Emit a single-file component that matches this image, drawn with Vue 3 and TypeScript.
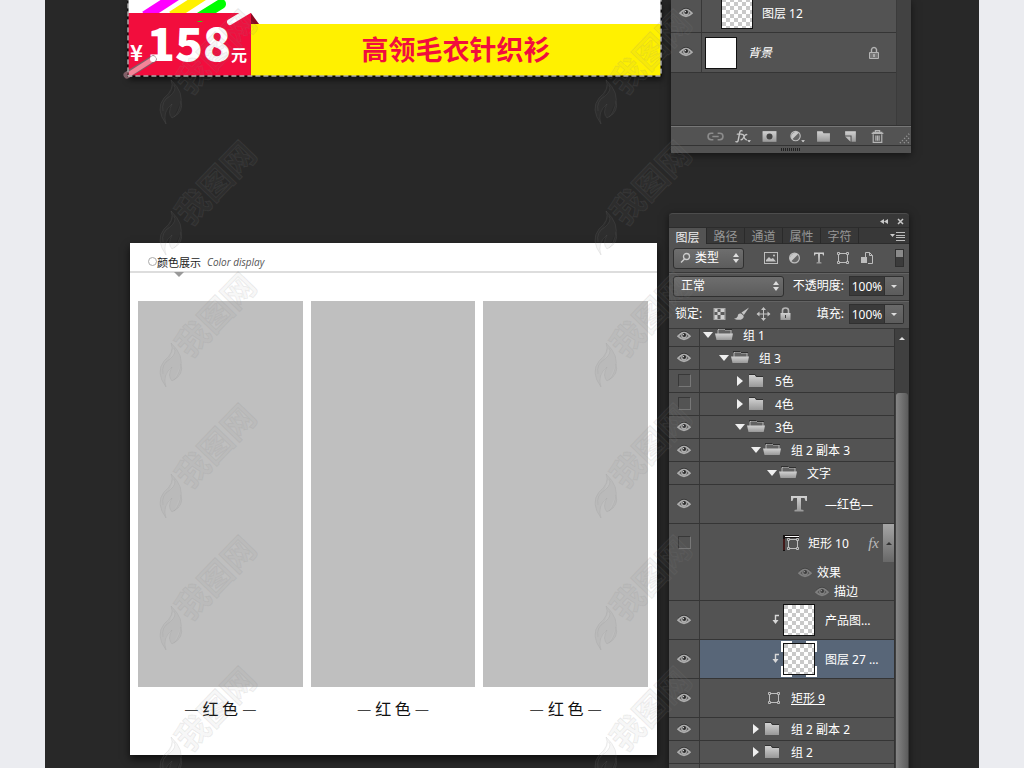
<script setup lang="ts">
import { ref } from 'vue'

type Kind = 'open' | 'closed' | 'text' | 'shape' | 'shapeOnly' | 'thumb'

interface Layer {
  name: string
  kind: Kind
  indent: number
  visible: boolean
  tall?: boolean
  selected?: boolean
  linked?: boolean
  effects?: string[]
}

const tabs = ['图层', '路径', '通道', '属性', '字符']
const activeTab = ref('图层')
const filter = ref('类型')
const mode = ref('正常')
const opacity = ref('100%')
const fill = ref('100%')

const layers = ref<Layer[]>([
  { name: '组 1', kind: 'open', indent: 3, visible: true },
  { name: '组 3', kind: 'open', indent: 19, visible: true },
  { name: '5色', kind: 'closed', indent: 35, visible: false },
  { name: '4色', kind: 'closed', indent: 35, visible: false },
  { name: '3色', kind: 'open', indent: 35, visible: true },
  { name: '组 2 副本 3', kind: 'open', indent: 51, visible: true },
  { name: '文字', kind: 'open', indent: 67, visible: true },
  { name: '—红色—', kind: 'text', indent: 83, visible: true, tall: true },
  { name: '矩形 10', kind: 'shape', indent: 83, visible: false, tall: true, effects: ['效果', '描边'] },
  { name: '产品图…', kind: 'thumb', indent: 71, visible: true, tall: true },
  { name: '图层 27 …', kind: 'thumb', indent: 71, visible: true, tall: true, selected: true },
  { name: '矩形 9', kind: 'shapeOnly', indent: 67, visible: true, tall: true, linked: true },
  { name: '组 2 副本 2', kind: 'closed', indent: 51, visible: true },
  { name: '组 2', kind: 'closed', indent: 51, visible: true },
  { name: '', kind: 'closed', indent: 51, visible: false },
])

const filterIcons = [
  { id: 'i-image', label: '像素图层' },
  { id: 'i-adjust', label: '调整图层' },
  { id: 'i-type', label: '文字图层' },
  { id: 'i-shape', label: '形状图层' },
  { id: 'i-smart', label: '智能对象' },
]
const lockIcons = [
  { id: 'i-checker', label: '锁定透明像素' },
  { id: 'i-brush', label: '锁定图像像素' },
  { id: 'i-move', label: '锁定位置' },
  { id: 'i-lock', label: '锁定全部' },
]
const tools = [
  { id: 'i-link', label: '链接图层' },
  { id: 'i-fx', label: '图层样式' },
  { id: 'i-mask', label: '蒙版' },
  { id: 'i-adjust-menu', label: '调整' },
  { id: 'i-folder', label: '新建组' },
  { id: 'i-new', label: '新建图层' },
  { id: 'i-trash', label: '删除图层' },
]
const swatches = ['红 色', '红 色', '红 色']
const marks = [0, 1].flatMap((c) => [0, 1, 2, 3, 4, 5].map((r) => ({ x: 159 + c * 435, y: 7 + Math.round(r * 131.4) })))
</script>

<template>
  <div class="page">
    <svg class="defs" aria-hidden="true">
      <defs>
        <linearGradient id="metal" x1="0" y1="0" x2="0" y2="1">
          <stop offset="0" stop-color="#d2d2d2" />
          <stop offset="1" stop-color="#989898" />
        </linearGradient>
        <pattern id="checks" width="8" height="8" patternUnits="userSpaceOnUse">
          <rect width="8" height="8" fill="#fff" />
          <path d="M0 0h4v4H0zM4 4h4v4H4z" fill="#c9c9c9" />
        </pattern>
      </defs>
      <symbol id="i-eye" viewBox="0 0 14 12">
        <path d="M1 4.500Q7 -2 13 4.500" fill="none" stroke="#333" stroke-width="1" />
        <path d="M1 6.200Q7 -1 13 6.200Q7 12.500 1 6.200z" fill="#5a5a5a" stroke="#adadad" stroke-width="1.700" />
        <circle cx="7" cy="5.800" r="2.900" fill="#adadad" />
        <circle cx="7.200" cy="5" r="1.900" fill="#2c2c2c" />
        <circle cx="6.400" cy="4.600" r=".7" fill="#ddd" />
      </symbol>
      <symbol id="i-down" viewBox="0 0 12 12"><path d="M0 3h10L5 9z" fill="#efefef" /></symbol>
      <symbol id="i-right" viewBox="0 0 12 12"><path d="M2 1v10l6-5z" fill="#efefef" /></symbol>
      <symbol id="i-folder-open" viewBox="0 0 20 14">
        <path d="M3 6V2l1-1h5l1 1h6v4" fill="#626262" stroke="#b5b5b5" />
        <path d="M2 0.500h7l1 1h7" fill="none" stroke="#303030" />
        <path d="M0 5.500h18l-1.300 6.500H1.500z" fill="url(#metal)" />
      </symbol>
      <symbol id="i-folder-closed" viewBox="0 0 20 14">
        <path d="M2 1h6l1 2h7v10H2z" fill="url(#metal)" />
        <path d="M2 .5h6l1.500 2H16" fill="none" stroke="#303030" />
      </symbol>
      <symbol id="i-shape" viewBox="0 0 14 14">
        <g fill="none" stroke="#bdbdbd">
          <path d="M3.500 2.500h7M3.500 11.500h7M2.500 3.500v7M11.500 3.500v7" />
          <path d="M1.500 1.500h2v2h-2zM10.500 1.500h2v2h-2zM1.500 10.500h2v2h-2zM10.500 10.500h2v2h-2z" />
        </g>
      </symbol>
      <symbol id="i-image" viewBox="0 0 14 14">
        <rect x=".5" y="1.500" width="13" height="11" fill="none" stroke="#bdbdbd" />
        <path d="M2 10.500V9L5 6l2 2 2-1 3 3.500z" fill="#c4c4c4" /><circle cx="10" cy="4.500" r="1" fill="#c4c4c4" />
      </symbol>
      <symbol id="i-adjust" viewBox="0 0 14 14">
        <circle cx="6.500" cy="7" r="4.900" fill="#666" stroke="#bdbdbd" stroke-width="1.200" />
        <path d="M3 10.500A5 5 0 0 1 10 3.500z" fill="#c8c8c8" />
      </symbol>
      <symbol id="i-type" viewBox="0 0 14 14">
        <path d="M2 1.500h10v3h-1L10.500 3H8v8l1.500.5v1h-5v-1L6 11V3H3.500L3 4.500H2z" fill="url(#metal)" />
      </symbol>
      <symbol id="i-type-large" viewBox="0 0 16 16">
        <path d="M0 0h16v5h-1.500L13.500 2H10v11.500l2.500.5v1.500h-9V14l2.500-.5V2H2.500L1.500 5H0z" fill="url(#metal)" />
      </symbol>
      <symbol id="i-smart" viewBox="0 0 14 14">
        <path d="M5.500 6V1.500h4l3 3v8H8M9.500 1.500v3h3" fill="none" stroke="#bdbdbd" /><path d="M1 6h6v6H1z" fill="#bdbdbd" />
      </symbol>
      <symbol id="i-checker" viewBox="0 0 14 14">
        <rect x="1.500" y="1.500" width="11" height="11" fill="#5c5c5c" stroke="#aaa" />
        <path d="M2 2h3v3H2zM8 2h4v3H8zM5 5h3v3H5zM2 8h3v4H2zM8 8h4v4H8z" fill="#d0d0d0" />
      </symbol>
      <symbol id="i-brush" viewBox="0 0 16 14">
        <path d="M16 0L8 5.500l2.500 2.500zM7.500 6.500Q4 6 4 9.500q-1 2.500-4 2.500 6 2.500 9 0 2-1 1-3.500z" fill="#c4c4c4" />
      </symbol>
      <symbol id="i-move" viewBox="0 0 14 14">
        <path d="M7 1v12M1 7h12" stroke="#c4c4c4" />
        <path d="M7 0L4.500 3h5zM7 14l-2.500-3h5zM0 7l3-2.500v5zM14 7l-3-2.500v5z" fill="#c4c4c4" />
      </symbol>
      <symbol id="i-lock" viewBox="0 0 14 14">
        <path d="M4 7V3.500Q4 1 7 1t3 2.500V7" fill="none" stroke="#b5b5b5" stroke-width="1.600" />
        <path d="M2 6h10v7H2z" fill="url(#metal)" /><path d="M6.500 8h1v3h-1z" fill="#444" />
      </symbol>
      <symbol id="i-lock-line" viewBox="0 0 14 14">
        <path d="M4.500 6V3.500Q5 1.500 7 1.500t2.500 2V6" fill="none" stroke="#b5b5b5" stroke-width="1.400" />
        <path d="M2.500 6.500h9v6h-9z" fill="#777" stroke="#b5b5b5" /><path d="M6.500 8h1v3h-1z" fill="#ddd" />
      </symbol>
      <symbol id="i-link" viewBox="0 0 16 14">
        <path d="M6 4H4a3 3 0 0 0 0 6h2M10 4h2a3 3 0 0 1 0 6h-2M5 7h6" fill="none" stroke="#8c8c8c" stroke-width="1.500" />
      </symbol>
      <symbol id="i-fx" viewBox="0 0 18 16">
        <g fill="none" stroke="#c4c4c4" stroke-width="1.500" stroke-linecap="round">
          <path d="M8.500 2Q6.500 1 6 4L4.500 11.500Q4 14.500 2 13.500M3.500 5.500h4.500" />
          <path d="M8.500 6Q10 5 10.500 8T13 11.500M13.500 6Q12 5.500 10.500 8.500T7.500 11.500" />
        </g>
        <path d="M14 12h4l-2 2z" fill="#ddd" />
      </symbol>
      <symbol id="i-mask" viewBox="0 0 14 14"><path d="M.5 2h13v10H.5z" fill="url(#metal)" /><circle cx="7" cy="7" r="2.800" fill="#444" /></symbol>
      <symbol id="i-adjust-menu" viewBox="0 0 18 16">
        <circle cx="8" cy="7.500" r="5" fill="#666" stroke="#bdbdbd" stroke-width="1.200" />
        <path d="M4.500 11A5 5 0 0 1 11.500 4z" fill="#c8c8c8" /><path d="M14 12h4l-2 2z" fill="#ddd" />
      </symbol>
      <symbol id="i-folder" viewBox="0 0 14 14"><path d="M1 2h5l1 2h6v8H1z" fill="url(#metal)" /></symbol>
      <symbol id="i-new" viewBox="0 0 14 14"><path d="M2 2h10v10H8V6H2z" fill="url(#metal)" /><path d="M2 7h5v5z" fill="#bdbdbd" /></symbol>
      <symbol id="i-trash" viewBox="0 0 14 14">
        <path d="M1.500 4h11M5 3V1.500h4V3M2.500 3h9M3 5v7.500h8V5M5.500 6v5M7 6v5M8.500 6v5" fill="none" stroke="#b5b5b5" stroke-width="1.100" />
      </symbol>
      <symbol id="i-clip" viewBox="0 0 12 14">
        <path d="M8 2.500H4.500V8" fill="none" stroke="#d8d8d8" stroke-width="1.400" /><path d="M1.500 7h6l-3 4z" fill="#d8d8d8" />
      </symbol>
    </svg>

    <main class="stage">
      <section class="row top">
        <div class="banner">
          <div class="price"><span class="yen">¥</span><strong>158</strong><span class="unit">元</span></div>
          <h1>高领毛衣针织衫</h1>
          <svg class="stripes" width="140" height="80" aria-hidden="true">
            <path d="M17 16L51 -6" stroke="#f0f" stroke-width="10" />
            <path d="M44 16L78 -6" stroke="#fff100" stroke-width="10" />
            <path d="M72 17L93 4" stroke="#0f0" stroke-width="10" stroke-linecap="round" />
            <path d="M1 13h100v8H1z" fill="#f20d3d" />
            <path d="M123 13v11h8z" fill="#8b0920" />
            <path d="M102 22L122 10" stroke="#fff" stroke-width="6" stroke-linecap="round" />
            <path d="M117 10h8L123 13H114z" fill="#fff" />
            <path d="M-1 75L25 59" stroke="#806068" stroke-width="7" stroke-linecap="round" />
            <path d="M0 75L25 59" stroke="#f58498" stroke-width="5" />
            <circle cx="25" cy="59" r="3" fill="#fff" />
          </svg>
          <svg class="ants" aria-hidden="true">
            <rect width="100%" height="140%" y="-40%" fill="none" stroke="#000" />
            <rect width="100%" height="140%" y="-40%" fill="none" stroke="#fff" stroke-dasharray="5 3" />
          </svg>
        </div>

        <aside class="panel small" aria-label="图层面板">
          <div class="list">
            <div class="layer tall cut">
              <button class="eye" aria-label="显示"><svg width="14" height="12"><use href="#i-eye" /></svg></button>
              <div class="body upper"><svg class="thumb" width="32" height="32"><rect width="32" height="32" fill="url(#checks)" /></svg><span class="text">图层 12</span></div>
            </div>
            <div class="layer tall">
              <button class="eye" aria-label="显示"><svg width="14" height="12"><use href="#i-eye" /></svg></button>
              <div class="body base"><span class="thumb white"></span><em>背景</em><svg class="locked" width="14" height="14"><use href="#i-lock-line" /></svg></div>
            </div>
          </div>
          <div class="tools">
            <button v-for="t in tools" :key="t.id" :aria-label="t.label"><svg width="17" height="15"><use :href="'#' + t.id" /></svg></button>
            <svg class="corner" width="12" height="12" aria-hidden="true"><path d="M1 11L11 1M5 11l6-6M9 11l2-2" stroke="#999" stroke-width="1.500" stroke-dasharray="1 2" /></svg>
          </div>
          <div class="grip"><i></i></div>
        </aside>
      </section>

      <section class="row lower">
        <article class="card">
          <header><h2><i></i>颜色展示</h2><em>Color display</em></header>
          <div class="swatches">
            <figure v-for="(s, i) in swatches" :key="i">
              <div class="swatch"></div>
              <figcaption><span>—</span>{{ s }}<span>—</span></figcaption>
            </figure>
          </div>
        </article>

        <aside class="panel large" aria-label="图层">
          <div class="title">
            <button aria-label="折叠"><svg width="9" height="7"><path d="M4 1v5L0 3.500zM8 1v5L4 3.500z" fill="#c8c8c8" /></svg></button>
            <button aria-label="关闭"><svg width="7" height="7"><path d="M1 1l5 5M6 1L1 6" stroke="#c8c8c8" stroke-width="1.500" /></svg></button>
          </div>
          <nav class="tabs">
            <button v-for="t in tabs" :key="t" :class="{ active: t === activeTab }" @click="activeTab = t">{{ t }}</button>
            <button class="menu" aria-label="菜单"><svg width="15" height="9"><path d="M0 2h5L2.500 5z" fill="#ccc" /><path d="M6 .5h9M6 3.500h9M6 5.500h9M6 8.500h9" stroke="#bbb" /></svg></button>
          </nav>
          <div class="bar filters">
            <label class="drop kind">
              <svg width="12" height="12" aria-hidden="true"><circle cx="7.500" cy="4.500" r="3" fill="none" stroke="#ccc" stroke-width="1.300" /><path d="M5.500 7L2 10.500" stroke="#ccc" stroke-width="1.500" /></svg>
              <select v-model="filter" aria-label="过滤"><option>类型</option></select>
              <svg class="arrows" width="6" height="10" aria-hidden="true"><path d="M0 4h6L3 0zM0 6h6l-3 4z" fill="#ddd" /></svg>
            </label>
            <div class="icons wide">
              <button v-for="f in filterIcons" :key="f.id" :aria-label="f.label"><svg width="14" height="14"><use :href="'#' + f.id" /></svg></button>
            </div>
            <button class="switch" aria-label="过滤开关"></button>
          </div>
          <div class="bar">
            <label class="drop mode">
              <select v-model="mode" aria-label="混合模式"><option>正常</option></select>
              <svg class="arrows" width="6" height="10" aria-hidden="true"><path d="M0 4h6L3 0zM0 6h6l-3 4z" fill="#ddd" /></svg>
            </label>
            <label class="value" for="opacity">不透明度:</label>
            <input id="opacity" v-model="opacity" /><button class="step" aria-label="不透明度滑块"></button>
          </div>
          <div class="bar">
            <span class="lock-label">锁定:</span>
            <div class="icons">
              <button v-for="l in lockIcons" :key="l.id" :aria-label="l.label"><svg width="15" height="14"><use :href="'#' + l.id" /></svg></button>
            </div>
            <label class="value" for="fill">填充:</label>
            <input id="fill" v-model="fill" /><button class="step" aria-label="填充滑块"></button>
          </div>
          <div class="scroller">
            <div class="list">
              <div v-for="(l, i) in layers" :key="i" class="layer" :class="{ tall: l.tall, cut: i === 0, selected: l.selected, expanded: l.effects }">
                <button class="eye" aria-label="切换可见性" @click="l.visible = !l.visible">
                  <svg v-if="l.visible" width="14" height="12"><use href="#i-eye" /></svg>
                  <span v-else-if="l.name" class="off"></span>
                </button>
                <div class="body" :style="{ paddingLeft: l.indent + 'px' }">
                  <div v-if="l.name" class="line">
                    <template v-if="l.kind === 'open' || l.kind === 'closed'">
                      <svg width="12" height="12"><use :href="l.kind === 'open' ? '#i-down' : '#i-right'" /></svg>
                      <svg class="folder" width="20" height="14"><use :href="'#i-folder-' + l.kind" /></svg>
                    </template>
                    <svg v-else-if="l.kind === 'text'" class="type" width="32" height="16"><use href="#i-type-large" /></svg>
                    <svg v-else-if="l.kind === 'shape'" class="shape" width="17" height="17"><path d="M0 0h16v3H2v13H0z" fill="#141010" /><path d="M2 1h14v1H2z" fill="#fff" /><path d="M1 4v11" stroke="#702020" /><use href="#i-shape" x="3" y="2" width="14" height="14" /></svg>
                    <svg v-else-if="l.kind === 'shapeOnly'" class="shape" width="14" height="14"><use href="#i-shape" /></svg>
                    <template v-else>
                      <svg width="12" height="14"><use href="#i-clip" /></svg>
                      <span class="frame"><svg class="thumb" width="32" height="32"><rect width="32" height="32" fill="url(#checks)" /></svg>
                        <svg v-if="l.selected" class="brackets" width="36" height="36"><path d="M1 11V1h10M25 1h10v10M35 25v10H25M11 35H1V25" fill="none" stroke="#fff" stroke-width="2" /></svg>
                      </span>
                    </template>
                    <span class="name" :class="{ linked: l.linked }">{{ l.name }}</span>
                    <template v-if="l.effects"><i class="fx">fx</i><button class="toggle" aria-label="收起效果"></button></template>
                  </div>
                  <div v-for="(e, j) in l.effects" :key="e" class="effect" :class="{ nested: j > 0 }"><svg width="14" height="12"><use href="#i-eye" /></svg>{{ e }}</div>
                </div>
              </div>
            </div>
            <div class="scroll"><button aria-label="向上滚动"></button><div class="thumb-bar"></div></div>
          </div>
        </aside>
      </section>
    </main>

    <svg class="watermark" aria-hidden="true">
      <g v-for="(m, i) in marks" :key="i" :transform="`translate(${m.x} ${m.y})`">
        <path d="M7 117Q-4 102 5 91Q16 82 12 73Q26 86 21 99Q18 109 13 111Q8 106 13 97Q3 105 7 117zM4 104Q2 94 11 89Q18 83 15 78M15 110Q25 104 22 94" />
        <text x="31" y="89" transform="rotate(-46 31 89)">我图网</text>
      </g>
    </svg>
  </div>
</template>

<style>
body { margin: 0; background: #ebecf0; }
</style>

<style scoped>
.page { position: relative; height: 100vh; overflow: hidden; padding: 0 45px; background: #ebecf0; font: 12px/16px 'Noto Sans', 'Noto Sans CJK SC', sans-serif; color: #fff; }
.page * { box-sizing: border-box; }
.defs { position: absolute; width: 0; height: 0; }
svg { display: block; flex: none; }
button { padding: 0; border: 0; background: none; color: inherit; font: inherit; display: flex; align-items: center; justify-content: center; flex: none; }
h1, h2, figure { margin: 0; }
.stage { height: 100%; background: #282828; display: flex; flex-direction: column; gap: 60px; }
.row { display: flex; align-items: flex-start; }
.top { padding: 0 68px 0 83px; gap: 10px; flex: none; }
.lower { padding: 0 70px 0 85px; gap: 12px; flex: 1; min-height: 0; }

.banner { position: relative; flex: 1; height: 76px; display: flex; align-items: flex-end; background: #fff; box-shadow: 1px 4px 6px #0009; }
.price { width: 123px; height: 63px; background: #f20d3d; display: flex; align-items: baseline; font-family: 'Noto Sans CJK SC', sans-serif; font-weight: 700; line-height: 56px; padding-left: 2px; white-space: nowrap; }
.price strong { font-size: 46px; margin-left: 4px; }
.yen { font-size: 22px; }
.unit { font-size: 16px; }
h1 { flex: 1; height: 52px; background: #fff100; color: #f20d3d; font: 700 27px/49px 'Noto Sans CJK SC', sans-serif; text-align: center; }
.stripes, .ants { position: absolute; left: 0; top: 0; overflow: visible; }
.ants { width: 100%; height: 100%; }
.ants rect { stroke-width: 1px; }

.panel { background: #535353; box-shadow: 0 2px 8px #0008; flex: none; display: flex; flex-direction: column; }
.small { width: 240px; }
.small .list { height: 126px; width: 226px; border-right: 1px solid #3b3b3b; background: #464646; box-shadow: 14px 0 #424242; }
.layer { display: flex; height: 23px; border-bottom: 1px solid #353535; background: #535353; }
.layer.tall { height: 39px; }
.layer.cut { height: 18px; align-items: flex-end; overflow: hidden; }
.layer.cut > * { height: 20px; }
.layer.cut .line { height: 18px; }
.small .layer.tall { height: 40px; }
.small .layer.cut.tall { height: 33px; }
.small .layer.cut > * { height: 38px; }
.layer.expanded { height: 77px; }
.eye { width: 31px; padding-bottom: 1px; border-right: 1px solid #383838; }
.off { width: 13px; height: 13px; border: 1px solid #383838; border-right-color: #777; border-bottom-color: #777; }
.expanded .eye { align-items: flex-start; padding-top: 12px; }
.body { flex: 1; min-width: 0; }
.small .body { display: flex; align-items: center; gap: 9px; }
.body.upper { padding-left: 19px; }
.body.base { padding: 0 15px 0 3px; }
.text { padding-top: 2px; }
.base em { margin-left: 2px; }
.locked { margin-left: auto; }
.thumb { width: 32px; height: 32px; border: 1px solid #111; display: block; }
.white { background: #fff; }
.tools { height: 20px; border-top: 1px solid #777; border-bottom: 1px solid #333; box-shadow: 0 -1px #333; display: flex; padding-left: 31px; }
.tools button { width: 27px; }
.corner { margin: 5px 0 0 auto; }
.grip { height: 7px; display: flex; justify-content: center; align-items: center; }
.grip i { width: 20px; height: 3px; background: repeating-linear-gradient(90deg, #222 0 1px, transparent 1px 2px); }

.large { width: 240px; height: 700px; background: none; }
.title { height: 14px; background: #383838; border-radius: 4px 4px 0 0; border-top: 1px solid #4c4c4c; display: flex; justify-content: flex-end; gap: 8px; padding: 2px 5px 0 0; }
.tabs { height: 17px; background: #383838; border-top: 1px solid #2c2c2c; border-bottom: 1px solid #2c2c2c; display: flex; }
.tabs button { width: 38px; border-right: 1px solid #2a2a2a; color: #969696; height: 16px; padding-top: 2px; }
.tabs .active { background: #535353; color: #eee; height: 17px; }
.tabs .menu { width: 15px; margin: 0 4px 0 auto; padding: 0; border: 0; }
.bar { height: 28px; background: #535353; border-bottom: 1px solid #383838; border-top: 1px solid #636363; display: flex; align-items: center; padding: 0 5px 2px 4px; flex: none; }
.filters { height: 29px; border-top: 0; padding-bottom: 0; }
.drop { height: 21px; border: 1px solid #303030; border-radius: 3px; background: linear-gradient(#6e6e6e, #5c5c5c); display: flex; align-items: center; padding: 0 4px 0 7px; }
.drop select { appearance: none; border: 0; padding: 0; margin: 0; background: none; color: #fff; font: inherit; flex: 1; min-width: 0; outline: 0; }
.kind { width: 71px; gap: 4px; padding-left: 5px; }
.mode { width: 111px; }
.icons { display: flex; flex: 1; }
.icons button { width: 22px; height: 20px; }
.lock-label { width: 35px; padding-left: 2px; }
.wide { padding-left: 15px; }
.wide button { width: 24px; }
.switch { width: 9px; height: 18px; border: 1px solid #2f2f2f; background: linear-gradient(#8a8a8a 0 7px, #3b3b3b 7px); }
.value { margin-left: auto; padding-right: 5px; }
.bar input { width: 36px; height: 20px; padding: 0; border: 1px solid #303030; background: #3a3a3a; color: #fff; font: 12px 'Noto Sans', sans-serif; text-align: center; outline: 0; }
.step { width: 19px; height: 20px; border: 1px solid #303030; border-left: 0; background: linear-gradient(#6a6a6a, #5c5c5c); border-radius: 0 2px 2px 0; }
.step::after, .toggle::after, .scroll button::after { content: ''; border: 3px solid transparent; border-top: 3px solid #ddd; border-bottom: 0; }

.scroller { flex: 1; min-height: 0; display: flex; overflow: hidden; }
.large .list { flex: 1; min-width: 0; }
.line { display: flex; align-items: center; height: 22px; }
.tall .line { height: 38px; }
.name { margin-left: 8px; padding-top: 2px; white-space: nowrap; }
.frame + .name { margin-left: 10px; }
.type + .name { margin-left: 10px; }
.linked { text-decoration: underline; margin-left: 10px; }
.selected .body { background: #586678; }
.frame { position: relative; }
.brackets { position: absolute; left: -2px; top: -2px; }
.fx { margin-left: auto; font: italic 15px 'Liberation Serif', serif; color: #bbb; }
.toggle { width: 11px; height: 38px; margin-left: 4px; background: linear-gradient(#a5a5a5, #686868); }
.toggle::after { transform: rotate(180deg); border-top-color: #333; }
.effect { display: flex; align-items: center; gap: 5px; height: 19px; padding: 2px 0 0 15px; }
.effect.nested { padding-left: 32px; }
.effect svg { opacity: .5; }
.scroll { width: 15px; background: #404040; border-left: 1px solid #333; padding-right: 1px; }
.scroll button { width: 100%; height: 18px; }
.scroll button::after { transform: rotate(180deg); }
.thumb-bar { margin: 46px 0 0 1px; height: 640px; border-radius: 3px; background: linear-gradient(90deg, #858585, #5c5c5c); }

.card { flex: 1; margin-top: 30px; height: 512px; background: #fff; color: #222; box-shadow: 0 4px 8px #000a; font-family: 'Noto Sans CJK SC', sans-serif; }
.card header { position: relative; height: 30px; border-bottom: 2px solid #ddd; padding: 9px 0 0 18px; display: flex; align-items: center; gap: 6px; }
.card header::after { content: ''; position: absolute; left: 44px; top: 29px; border: 5px solid transparent; border-top-color: #999; border-bottom: 0; }
h2 { display: flex; align-items: center; font-size: 11px; font-weight: 400; line-height: 16px; }
h2 i { width: 9px; height: 9px; border: 1px solid #aaa; border-radius: 50%; }
.card header em { font: italic 10px/16px 'Open Sans', sans-serif; color: #555; }
.swatches { display: flex; gap: 8px; padding: 28px 9px 0 8px; }
figure { flex: 1; }
.swatch { height: 386px; background: #bfbfbf; }
figcaption { display: flex; justify-content: center; gap: 4px; padding-top: 9px; font-size: 16px; line-height: 24px; font-weight: 400; color: #111; }
figcaption span { font-size: 16px; color: #444; }
.watermark { position: absolute; left: 0; top: 0; width: 100%; height: 100%; pointer-events: none; fill: #808080; fill-opacity: .07; stroke: #888; stroke-opacity: .14; font: 700 33px 'Noto Sans CJK SC', sans-serif; }
</style>
